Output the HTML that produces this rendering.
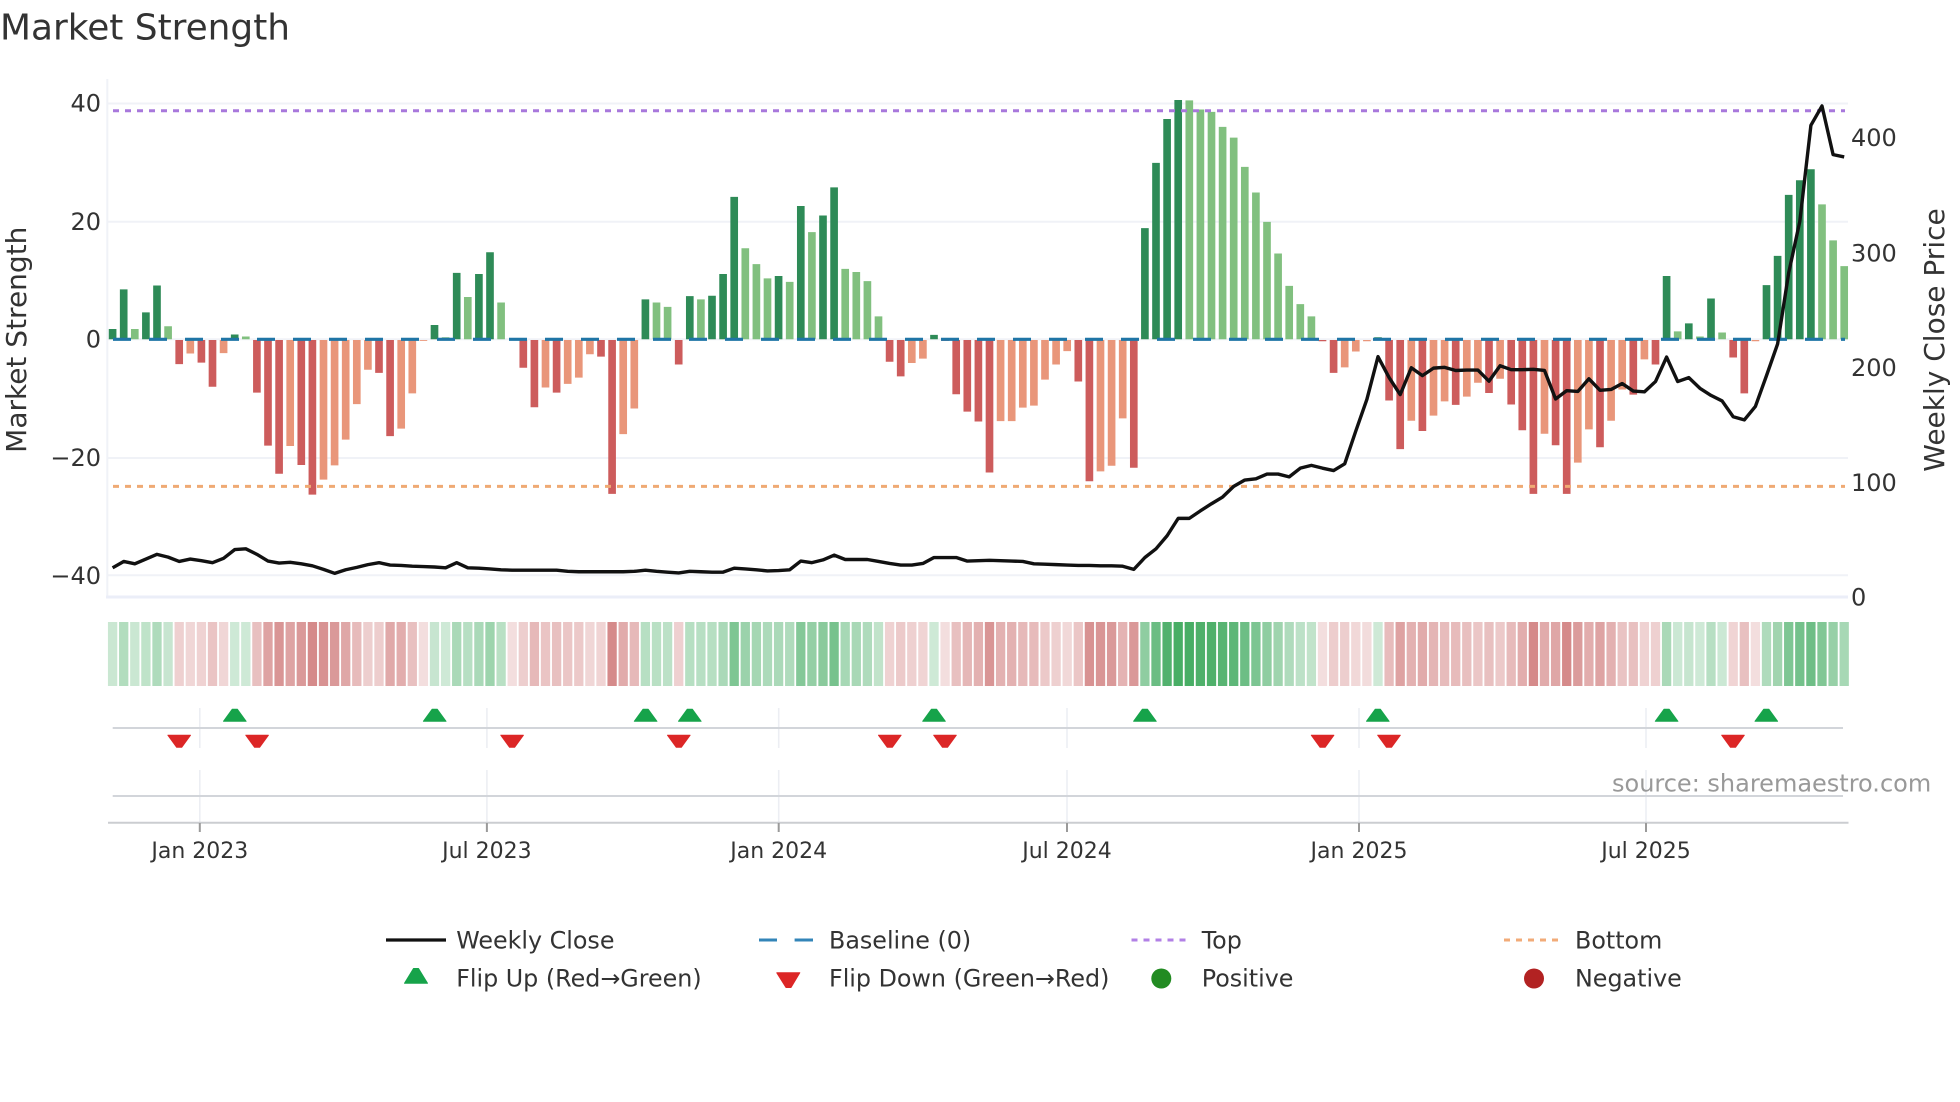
<!DOCTYPE html>
<html lang="en">
<head>
<meta charset="utf-8">
<title>Market Strength</title>
<style>
html,body{margin:0;padding:0;background:#fff}
svg{display:block}
text{font-family:"DejaVu Sans","Liberation Sans",sans-serif;fill:#333}
.t{font-size:24px}
.x{font-size:22px;text-anchor:middle}
.l{font-size:23.8px}
.a{font-size:28px;text-anchor:middle}
</style>
</head>
<body>
<svg width="1960" height="1102" viewBox="0 0 1960 1102" xmlns="http://www.w3.org/2000/svg">
<rect width="1960" height="1102" fill="#fff"/>

<text x="0" y="39.5" style="font-size:35.9px">Market Strength</text>

<!-- grid -->
<g stroke="#f0f2f7" stroke-width="2" fill="none">
<path d="M107.3 79V598"/>
<path d="M108 103.5H1848M108 221.8H1848M108 339.3H1848M108 458H1848M108 575.3H1848"/>
</g>
<path d="M106 597H1848" stroke="#ebeef8" stroke-width="3"/>

<!-- bars -->
<g transform="translate(112.6,0) scale(11.1,0.3954)" stroke-width="0.69" fill="none">
<path stroke="#2e8b57" d="M0 858V832M1 858V732M3 858V790M4 858V722M11 858V846M29 858V822M31 858V690M33 858V693M34 858V638M48 858V757M52 858V749M54 858V748M55 858V693M56 858V498M60 858V698M62 858V521M64 858V545M65 858V474M74 858V847M93 858V577M94 858V412M95 858V301M96 858V253M114 858V853M140 858V698M142 858V818M144 858V755M149 858V721M150 858V647M151 858V493M152 858V456M153 858V428"/>
<path stroke="#81c07f" d="M2 858V832M5 858V825M12 858V851M30 858V853M32 858V751M35 858V765M49 858V765M50 858V776M53 858V757M57 858V628M58 858V668M59 858V704M61 858V713M63 858V587M66 858V680M67 858V688M68 858V711M69 858V800M97 858V254M98 858V277M99 858V283M100 858V321M101 858V348M102 858V422M103 858V487M104 858V561M105 858V641M106 858V723M107 858V769M108 858V800M141 858V838M143 858V851M145 858V841M154 858V517M155 858V608M156 858V673"/>
<path stroke="#cd5c5c" d="M6 860V921M8 860V917M9 860V978M13 860V993M14 860V1127M15 860V1198M17 860V1176M18 860V1251M24 860V943M25 860V1103M37 860V930M38 860V1030M40 860V993M44 860V902M45 860V1249M51 860V922M70 860V915M71 860V952M75 860V862M76 860V997M77 860V1041M78 860V1066M79 860V1195M87 860V965M88 860V1217M92 860V1183M109 860V863M110 860V943M115 860V1013M116 860V1136M118 860V1090M121 860V1024M124 860V994M126 860V1023M127 860V1088M128 860V1249M130 860V1126M131 860V1249M134 860V1131M137 860V998M139 860V922M146 860V904M147 860V995"/>
<path stroke="#e9967a" d="M7 860V894M10 860V893M16 860V1128M19 860V1213M20 860V1177M21 860V1112M22 860V1022M23 860V935M26 860V1084M27 860V995M28 860V862M39 860V980M41 860V971M42 860V955M43 860V896M46 860V1098M47 860V1033M72 860V918M73 860V907M80 860V1065M81 860V1065M82 860V1031M83 860V1026M84 860V960M85 860V922M86 860V888M89 860V1192M90 860V1178M91 860V1058M111 860V929M112 860V889M113 860V863M117 860V1064M119 860V1051M120 860V1015M122 860V1003M123 860V968M125 860V958M129 860V1097M132 860V1170M133 860V1086M135 860V1064M136 860V985M138 860V909M148 860V863"/>
</g>

<!-- reference lines -->
<path d="M113 110.7H1845" stroke="#a878dc" stroke-width="3" stroke-dasharray="6 6" fill="none"/>
<path d="M113 486.4H1845" stroke="#efaa74" stroke-width="3" stroke-dasharray="6 6" fill="none"/>
<path d="M113 339.3H1845" stroke="#1f75a6" stroke-width="3.2" stroke-dasharray="18 18" fill="none"/>

<!-- weekly close -->
<g transform="translate(112.6,0) scale(11.1,0.3954)">
<polyline fill="none" stroke="#111" stroke-width="3.4" stroke-linejoin="round" vector-effect="non-scaling-stroke" points="0,1436 1,1420 2,1426 3,1414 4,1402 5,1409 6,1420 7,1414 8,1418 9,1423 10,1412 11,1390 12,1388 13,1402 14,1419 15,1424 16,1422 17,1426 18,1431 19,1440 20,1450 21,1441 22,1435 23,1428 24,1423 25,1429 26,1430 27,1432 28,1433 29,1434 30,1436 31,1423 32,1436 33,1437 34,1439 35,1441 36,1442 37,1442 38,1442 39,1442 40,1442 41,1445 42,1446 43,1446 44,1446 45,1446 46,1446 47,1445 48,1442 49,1445 50,1447 51,1449 52,1445 53,1446 54,1447 55,1447 56,1437 57,1439 58,1441 59,1444 60,1443 61,1441 62,1419 63,1423 64,1416 65,1404 66,1415 67,1415 68,1415 69,1420 70,1425 71,1429 72,1429 73,1425 74,1410 75,1410 76,1410 77,1419 78,1418 79,1417 80,1418 81,1419 82,1420 83,1426 84,1427 85,1428 86,1429 87,1430 88,1430 89,1431 90,1431 91,1432 92,1440 93,1410 94,1388 95,1355 96,1311 97,1311 98,1292 99,1274 100,1257 101,1230 102,1214 103,1211 104,1199 105,1199 106,1206 107,1184 108,1177 109,1184 110,1190 111,1173 112,1090 113,1010 114,902 115,955 116,998 117,930 118,950 119,931 120,929 121,937 122,936 123,936 124,964 125,925 126,935 127,935 128,934 129,937 130,1009 131,988 132,990 133,958 134,987 135,985 136,970 137,989 138,991 139,965 140,903 141,965 142,955 143,982 144,1000 145,1014 146,1054 147,1062 148,1028 149,950 150,870 151,690 152,560 153,317 154,268 155,391 156,397"/>
</g>

<!-- y ticks -->
<g text-anchor="end">
<text class="t" x="101" y="111.5">40</text>
<text class="t" x="101" y="230">20</text>
<text class="t" x="101" y="347.5">0</text>
<text class="t" x="101" y="466">−20</text>
<text class="t" x="101" y="584">−40</text>
</g>
<text class="t" x="1851" y="146">400</text>
<text class="t" x="1851" y="261.5">300</text>
<text class="t" x="1851" y="376">200</text>
<text class="t" x="1851" y="491">100</text>
<text class="t" x="1851" y="605.5">0</text>

<text class="a" transform="translate(26,339.7) rotate(-90)">Market Strength</text>
<text class="a" transform="translate(1944,340) rotate(-90)">Weekly Close Price</text>

<!-- heat strip -->
<g transform="translate(112.6,622) scale(11.1,64)" stroke-width="0.838" fill="none">
<g stroke="#2aa04c" opacity=".9">
<path opacity=".28" d="M0 0v1"/><path opacity=".40" d="M1 0v1"/><path opacity=".28" d="M2 0v1"/><path opacity=".33" d="M3 0v1"/><path opacity=".41" d="M4 0v1"/><path opacity=".29" d="M5 0v1"/><path opacity=".26" d="M11 0v1"/><path opacity=".26" d="M12 0v1"/><path opacity=".29" d="M29 0v1"/><path opacity=".26" d="M30 0v1"/><path opacity=".44" d="M31 0v1"/><path opacity=".37" d="M32 0v1"/><path opacity=".44" d="M33 0v1"/><path opacity=".51" d="M34 0v1"/><path opacity=".36" d="M35 0v1"/><path opacity=".37" d="M48 0v1"/><path opacity=".36" d="M49 0v1"/><path opacity=".35" d="M50 0v1"/><path opacity=".38" d="M52 0v1"/><path opacity=".37" d="M53 0v1"/><path opacity=".38" d="M54 0v1"/><path opacity=".44" d="M55 0v1"/><path opacity=".67" d="M56 0v1"/><path opacity=".52" d="M57 0v1"/><path opacity=".47" d="M58 0v1"/><path opacity=".43" d="M59 0v1"/><path opacity=".44" d="M60 0v1"/><path opacity=".42" d="M61 0v1"/><path opacity=".64" d="M62 0v1"/><path opacity=".56" d="M63 0v1"/><path opacity=".61" d="M64 0v1"/><path opacity=".70" d="M65 0v1"/><path opacity=".46" d="M66 0v1"/><path opacity=".45" d="M67 0v1"/><path opacity=".42" d="M68 0v1"/><path opacity=".32" d="M69 0v1"/><path opacity=".26" d="M74 0v1"/><path opacity=".58" d="M93 0v1"/><path opacity=".77" d="M94 0v1"/><path opacity=".90" d="M95 0v1"/><path opacity=".95" d="M96 0v1"/><path opacity=".95" d="M97 0v1"/><path opacity=".92" d="M98 0v1"/><path opacity=".92" d="M99 0v1"/><path opacity=".87" d="M100 0v1"/><path opacity=".84" d="M101 0v1"/><path opacity=".76" d="M102 0v1"/><path opacity=".68" d="M103 0v1"/><path opacity=".59" d="M104 0v1"/><path opacity=".50" d="M105 0v1"/><path opacity=".41" d="M106 0v1"/><path opacity=".35" d="M107 0v1"/><path opacity=".32" d="M108 0v1"/><path opacity=".26" d="M114 0v1"/><path opacity=".44" d="M140 0v1"/><path opacity=".27" d="M141 0v1"/><path opacity=".30" d="M142 0v1"/><path opacity=".26" d="M143 0v1"/><path opacity=".37" d="M144 0v1"/><path opacity=".27" d="M145 0v1"/><path opacity=".41" d="M149 0v1"/><path opacity=".49" d="M150 0v1"/><path opacity=".67" d="M151 0v1"/><path opacity=".72" d="M152 0v1"/><path opacity=".75" d="M153 0v1"/><path opacity=".65" d="M154 0v1"/><path opacity=".54" d="M155 0v1"/><path opacity=".46" d="M156 0v1"/>
</g>
<g stroke="#b93c3c">
<path opacity=".24" d="M6 0v1"/><path opacity=".21" d="M7 0v1"/><path opacity=".23" d="M8 0v1"/><path opacity=".30" d="M9 0v1"/><path opacity=".21" d="M10 0v1"/><path opacity=".32" d="M13 0v1"/><path opacity=".47" d="M14 0v1"/><path opacity=".54" d="M15 0v1"/><path opacity=".47" d="M16 0v1"/><path opacity=".52" d="M17 0v1"/><path opacity=".60" d="M18 0v1"/><path opacity=".56" d="M19 0v1"/><path opacity=".52" d="M20 0v1"/><path opacity=".45" d="M21 0v1"/><path opacity=".35" d="M22 0v1"/><path opacity=".25" d="M23 0v1"/><path opacity=".26" d="M24 0v1"/><path opacity=".44" d="M25 0v1"/><path opacity=".42" d="M26 0v1"/><path opacity=".32" d="M27 0v1"/><path opacity=".17" d="M28 0v1"/><path opacity=".17" d="M36 0v1"/><path opacity=".25" d="M37 0v1"/><path opacity=".36" d="M38 0v1"/><path opacity=".30" d="M39 0v1"/><path opacity=".32" d="M40 0v1"/><path opacity=".29" d="M41 0v1"/><path opacity=".28" d="M42 0v1"/><path opacity=".21" d="M43 0v1"/><path opacity=".22" d="M44 0v1"/><path opacity=".60" d="M45 0v1"/><path opacity=".43" d="M46 0v1"/><path opacity=".36" d="M47 0v1"/><path opacity=".24" d="M51 0v1"/><path opacity=".23" d="M70 0v1"/><path opacity=".27" d="M71 0v1"/><path opacity=".24" d="M72 0v1"/><path opacity=".22" d="M73 0v1"/><path opacity=".17" d="M75 0v1"/><path opacity=".32" d="M76 0v1"/><path opacity=".37" d="M77 0v1"/><path opacity=".40" d="M78 0v1"/><path opacity=".54" d="M79 0v1"/><path opacity=".40" d="M80 0v1"/><path opacity=".40" d="M81 0v1"/><path opacity=".36" d="M82 0v1"/><path opacity=".35" d="M83 0v1"/><path opacity=".28" d="M84 0v1"/><path opacity=".24" d="M85 0v1"/><path opacity=".20" d="M86 0v1"/><path opacity=".29" d="M87 0v1"/><path opacity=".56" d="M88 0v1"/><path opacity=".54" d="M89 0v1"/><path opacity=".52" d="M90 0v1"/><path opacity=".39" d="M91 0v1"/><path opacity=".53" d="M92 0v1"/><path opacity=".17" d="M109 0v1"/><path opacity=".26" d="M110 0v1"/><path opacity=".25" d="M111 0v1"/><path opacity=".20" d="M112 0v1"/><path opacity=".18" d="M113 0v1"/><path opacity=".34" d="M115 0v1"/><path opacity=".48" d="M116 0v1"/><path opacity=".40" d="M117 0v1"/><path opacity=".43" d="M118 0v1"/><path opacity=".38" d="M119 0v1"/><path opacity=".34" d="M120 0v1"/><path opacity=".35" d="M121 0v1"/><path opacity=".33" d="M122 0v1"/><path opacity=".29" d="M123 0v1"/><path opacity=".32" d="M124 0v1"/><path opacity=".28" d="M125 0v1"/><path opacity=".35" d="M126 0v1"/><path opacity=".42" d="M127 0v1"/><path opacity=".60" d="M128 0v1"/><path opacity=".43" d="M129 0v1"/><path opacity=".46" d="M130 0v1"/><path opacity=".60" d="M131 0v1"/><path opacity=".51" d="M132 0v1"/><path opacity=".42" d="M133 0v1"/><path opacity=".47" d="M134 0v1"/><path opacity=".40" d="M135 0v1"/><path opacity=".31" d="M136 0v1"/><path opacity=".32" d="M137 0v1"/><path opacity=".23" d="M138 0v1"/><path opacity=".24" d="M139 0v1"/><path opacity=".22" d="M146 0v1"/><path opacity=".32" d="M147 0v1"/><path opacity=".17" d="M148 0v1"/>
</g>
</g>

<!-- lower panels -->
<g stroke="#eceef3" stroke-width="1.6" fill="none">
<path d="M199.8 708V748M199.8 770V822M486.9 708V748M486.9 770V822M778.7 708V748M778.7 770V822M1067 708V748M1067 770V822M1359 708V748M1359 770V822M1646 708V748M1646 770V822"/>
</g>
<path d="M112.7 728H1843M112.7 796H1843" stroke="#d2d5da" stroke-width="2" fill="none"/>
<path d="M108 822.7H1848.5" stroke="#cbcdd1" stroke-width="2" fill="none"/>
<path d="M199.8 823V832M486.9 823V832M778.7 823V832M1067 823V832M1359 823V832M1646 823V832" stroke="#9a9a9a" stroke-width="2" fill="none"/>

<g fill="#16a34a" stroke="#16a34a" stroke-width="1" stroke-linejoin="round">
<path transform="translate(234.8)" d="M-11.3 721.3L-2.5 709.2H2.5L11.3 721.3Z"/>
<path transform="translate(434.7)" d="M-11.3 721.3L-2.5 709.2H2.5L11.3 721.3Z"/>
<path transform="translate(645.6)" d="M-11.3 721.3L-2.5 709.2H2.5L11.3 721.3Z"/>
<path transform="translate(689.8)" d="M-11.3 721.3L-2.5 709.2H2.5L11.3 721.3Z"/>
<path transform="translate(934)" d="M-11.3 721.3L-2.5 709.2H2.5L11.3 721.3Z"/>
<path transform="translate(1144.9)" d="M-11.3 721.3L-2.5 709.2H2.5L11.3 721.3Z"/>
<path transform="translate(1377.8)" d="M-11.3 721.3L-2.5 709.2H2.5L11.3 721.3Z"/>
<path transform="translate(1666.6)" d="M-11.3 721.3L-2.5 709.2H2.5L11.3 721.3Z"/>
<path transform="translate(1766.3)" d="M-11.3 721.3L-2.5 709.2H2.5L11.3 721.3Z"/>
</g>
<g fill="#dc2626" stroke="#dc2626" stroke-width="1" stroke-linejoin="round">
<path transform="translate(179.2)" d="M-11.3 735.2H11.3L2.5 747.3H-2.5Z"/>
<path transform="translate(257.1)" d="M-11.3 735.2H11.3L2.5 747.3H-2.5Z"/>
<path transform="translate(512.1)" d="M-11.3 735.2H11.3L2.5 747.3H-2.5Z"/>
<path transform="translate(678.8)" d="M-11.3 735.2H11.3L2.5 747.3H-2.5Z"/>
<path transform="translate(889.8)" d="M-11.3 735.2H11.3L2.5 747.3H-2.5Z"/>
<path transform="translate(945)" d="M-11.3 735.2H11.3L2.5 747.3H-2.5Z"/>
<path transform="translate(1322.6)" d="M-11.3 735.2H11.3L2.5 747.3H-2.5Z"/>
<path transform="translate(1389)" d="M-11.3 735.2H11.3L2.5 747.3H-2.5Z"/>
<path transform="translate(1733)" d="M-11.3 735.2H11.3L2.5 747.3H-2.5Z"/>
</g>

<text x="1612" y="791.7" style="font-size:24px;fill:#999">source: sharemaestro.com</text>

<text class="x" x="199.8" y="858">Jan 2023</text>
<text class="x" x="486.9" y="858">Jul 2023</text>
<text class="x" x="778.7" y="858">Jan 2024</text>
<text class="x" x="1067" y="858">Jul 2024</text>
<text class="x" x="1359" y="858">Jan 2025</text>
<text class="x" x="1646" y="858">Jul 2025</text>

<!-- legend -->
<path d="M386 940H446" stroke="#111" stroke-width="3.2" fill="none"/>
<text class="l" x="456.2" y="948.3">Weekly Close</text>
<path d="M759 940H777M794.6 940H813" stroke="#3385b8" stroke-width="3" fill="none"/>
<text class="l" x="829" y="948.3">Baseline (0)</text>
<path d="M1131.5 940H1186" stroke="#b280e6" stroke-width="3" stroke-dasharray="6 6" fill="none"/>
<text class="l" x="1201.7" y="948.3">Top</text>
<path d="M1504 940H1559" stroke="#f2ab78" stroke-width="3" stroke-dasharray="6 6" fill="none"/>
<text class="l" x="1575" y="948.3">Bottom</text>

<path d="M404.5 983.2L413.5 968.5H418.5L427.5 983.2Z" fill="#16a34a" stroke="#16a34a" stroke-width="1" stroke-linejoin="round"/>
<text class="l" x="456.2" y="986.5">Flip Up (Red→Green)</text>
<path d="M776.8 972.8H799.8L791 987.5H786Z" fill="#dc2626" stroke="#dc2626" stroke-width="1" stroke-linejoin="round"/>
<text class="l" x="829" y="986.5">Flip Down (Green→Red)</text>
<circle cx="1161.3" cy="978.5" r="10" fill="#228b22"/>
<text class="l" x="1201.7" y="986.5">Positive</text>
<circle cx="1534" cy="978.5" r="10" fill="#b22222"/>
<text class="l" x="1575" y="986.5">Negative</text>
</svg>
</body>
</html>
